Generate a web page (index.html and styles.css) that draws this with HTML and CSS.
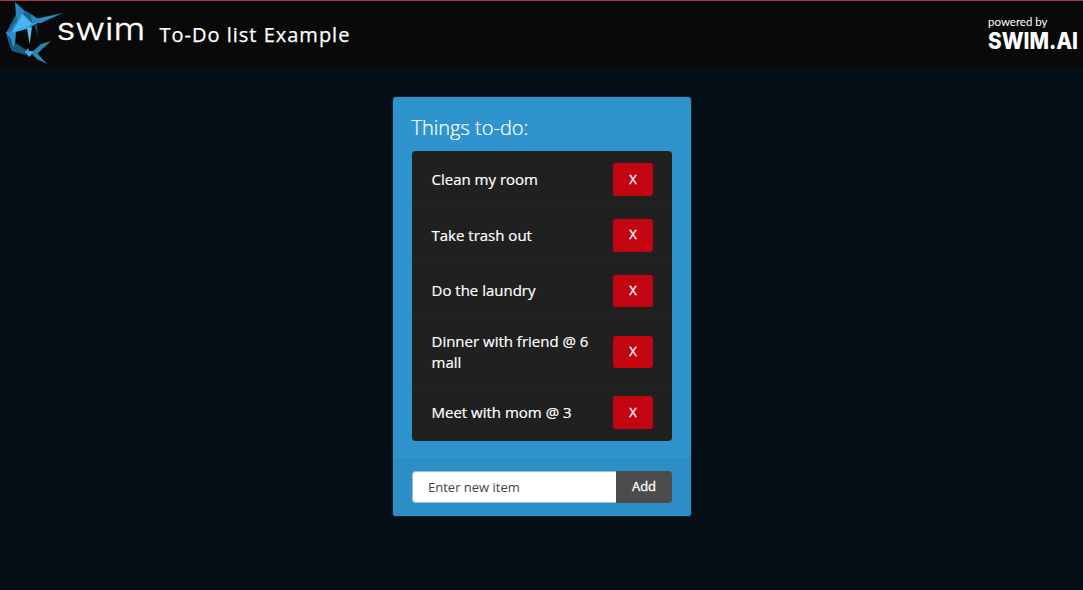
FILE: index.html
```
<!DOCTYPE html>
<html lang="en">
<head>
<meta charset="utf-8">
<title>To-Do list Example</title>
<link rel="stylesheet" href="styles.css">
</head>
<body>
<header class="topbar">
  <div class="brand">
    <svg class="logo" viewBox="0 0 150 68" width="150" height="68" aria-label="swim">
      <polygon fill="#2585bd" points="15,2 27,13 22.3,14.5 16,17"/>
      <polygon fill="#2a88bf" points="16,15 22.3,14 11.3,33.3 6,33.3"/>
      <polygon fill="#1c6591" points="16,15 17,20 10,31 6,33.3"/>
      <polygon fill="#1b6593" points="22,14 26,11 33,15 38,20 32.3,24.5"/>
      <polygon fill="#2a88bf" points="31,15 39,19 41,22 32.3,24.5"/>
      <polygon fill="#45b5f4" points="22.3,13.8 33,24.3 11,33.5"/>
      <polygon fill="#3aa5e2" points="32,24 41,21 27,29 10,33.5"/>
      <polygon fill="#298bc3" points="37,18.5 63,13 41,23 35,23"/>
      <polygon fill="#154a6c" points="34,25 37,24 38,36"/>
      <polygon fill="#55bff5" points="27,28 32,27 29.5,44"/>
      <polygon fill="#2b8fc9" points="6,32 16,32 15,44 12,51 9,43"/>
      <polygon fill="#15547b" points="7,34 11,39 13.5,51 10.5,48"/>
      <polygon fill="#1b5b83" points="12,51 15.5,43 28,51 26,55"/>
      <polygon fill="#40aae4" points="25,52 28,48 29,51 35,51 29,57"/>
      <polygon fill="#2b82b7" points="32,52 41,44 51,41 37,54"/>
      <polygon fill="#2c86b8" points="31,53 37,53 47,64 37,59"/>
      <text class="wordmark" x="56.5" y="39.5" textLength="89" lengthAdjust="spacingAndGlyphs">swim</text>
    </svg>
    <h1 class="title">To-Do list Example</h1>
  </div>
  <div class="powered">
    <span>powered by</span>
    <svg class="company-logo" viewBox="0 0 95 30" width="95" height="30">
      <text class="company" x="0" y="19" textLength="90" lengthAdjust="spacingAndGlyphs">SWIM.AI</text>
    </svg>
  </div>
</header>
<main class="card">
  <section class="card-body">
    <h2 class="card-title">Things to-do:</h2>
    <ul class="list">
      <li class="item"><span>Clean my room</span><button class="remove">X</button></li>
      <li class="item"><span>Take trash out</span><button class="remove">X</button></li>
      <li class="item"><span>Do the laundry</span><button class="remove">X</button></li>
      <li class="item tall"><span>Dinner with friend @ 6 mall</span><button class="remove">X</button></li>
      <li class="item"><span>Meet with mom @ 3</span><button class="remove">X</button></li>
    </ul>
  </section>
  <form class="card-footer">
    <input class="entry" placeholder="Enter new item" aria-label="New item"><button class="add" type="button">Add</button>
  </form>
</main>
</body>
</html>
```
FILE: styles.css
```
* { box-sizing: border-box; }
body {
  margin: 0;
  min-height: 590px;
  background: #040f17;
  color: #fff;
  font-family: "Open Sans", sans-serif;
  font-size: 15px;
  overflow: hidden;
}
.topbar {
  display: flex;
  justify-content: space-between;
  height: 68px;
  border-top: 1px solid #a23b4a;
  background: #090909;
}
.brand { display: flex; }
.logo { display: block; margin-top: -1px; }
.wordmark {
  fill: #fff;
  stroke: #fff;
  stroke-width: .3px;
  font-family: Inter, sans-serif;
  font-size: 31px;
  font-weight: 300;
}
.title {
  margin: 19px 0 0 9.5px;
  font-size: 20px;
  line-height: 30px;
  font-weight: 500;
  letter-spacing: 1px;
  -webkit-text-stroke: .25px #fff;
}
.powered {
  display: flex;
  flex-direction: column;
  width: 95px;
  padding-top: 13px;
  font-family: Lato, sans-serif;
  font-size: 11.5px;
  line-height: 16px;
}
.company-logo { display: block; overflow: visible; }
.company {
  fill: #fff;
  font-family: Inter, sans-serif;
  font-size: 23px;
  font-weight: 800;
}
.card {
  width: 300px;
  height: 421px;
  margin: 28px 0 0 392px;
  border: 1px solid #191f23;
  border-radius: 4px;
  background: #2f94ce;
  overflow: hidden;
}
.card-body { height: 361px; padding: 17px 19px 0; }
.card-title {
  margin: 0 0 10px -.5px;
  font-size: 20px;
  line-height: 27px;
  font-weight: 300;
  -webkit-text-stroke: .2px #fff;
}
.list {
  margin: 0;
  padding: 0 0 .8px;
  border-radius: 4px;
  background: #202020;
  list-style: none;
}
.item {
  display: flex;
  align-items: center;
  justify-content: space-between;
  height: 55.6px;
  padding: 0 19px 0 19.5px;
  border-top: 1px solid #252525;
  font-weight: 500;
  line-height: 21px;
  -webkit-text-stroke: .2px #fff;
}
.item:first-child { height: 56.1px; border-top-color: transparent; }
.item span { width: 164px; }
.item.tall { height: 66px; }
.remove {
  width: 40px;
  height: 32.5px;
  padding: 0 0 2px;
  border: 0;
  border-radius: 3px;
  background: #c20511;
  color: #fff;
  font: 500 13px "Open Sans", sans-serif;
  -webkit-text-stroke: .3px #fff;
}
.card-footer {
  display: flex;
  height: 58px;
  padding: 13px 19px;
  background: #2d8ec5;
}
.entry {
  width: 204px;
  height: 32px;
  padding: 0 15px;
  border: 1px solid #8ac4e6;
  border-right: 0;
  border-radius: 4px 0 0 4px;
  background: #fff;
  font: 13px "Open Sans", sans-serif;
}
.entry::placeholder { color: #444; opacity: 1; }
.add {
  width: 56px;
  height: 32px;
  padding: 0 0 2px;
  border: 0;
  border-radius: 0 4px 4px 0;
  background: #4c4c4c;
  color: #fff;
  font: 500 13px "Open Sans", sans-serif;
  -webkit-text-stroke: .3px #fff;
}
```
